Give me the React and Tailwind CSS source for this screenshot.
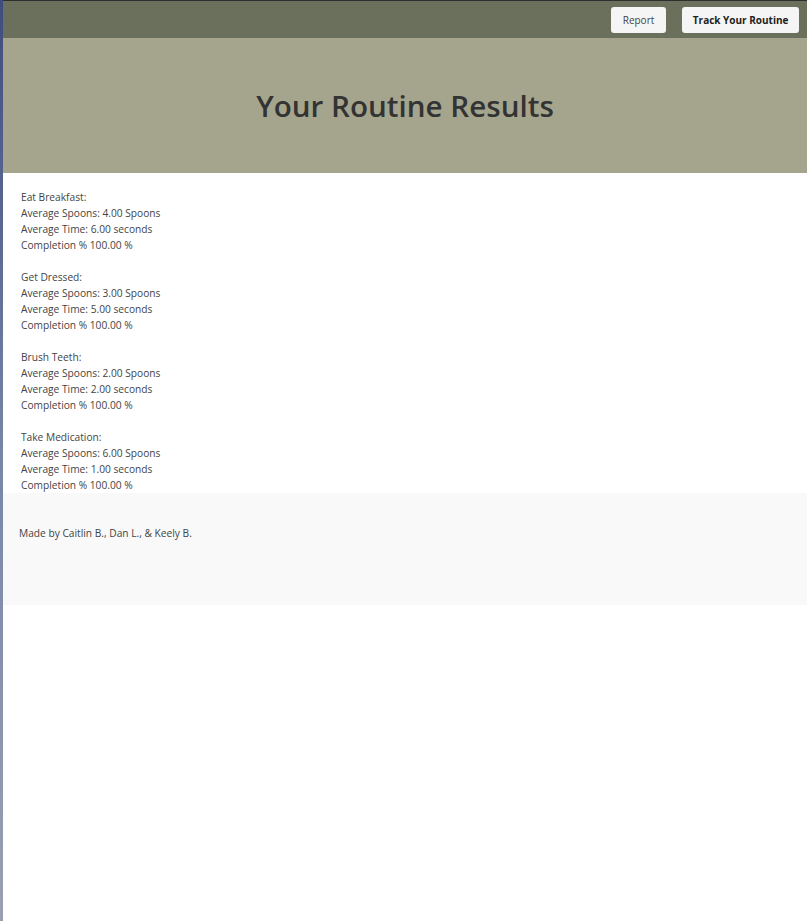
import React from "react";

const routines = [
  { name: "Eat Breakfast", spoons: "4.00", time: "6.00" },
  { name: "Get Dressed", spoons: "3.00", time: "5.00" },
  { name: "Brush Teeth", spoons: "2.00", time: "2.00" },
  { name: "Take Medication", spoons: "6.00", time: "1.00" },
];

export default function App() {
  return (
    <div className="flex min-h-[921px] bg-white" style={{ fontFamily: '"Open Sans", "Noto Sans", sans-serif' }}>
      <div className="w-[3px] shrink-0 bg-gradient-to-b from-[#3f4d7c] via-[#7886a8] to-[#9aa0b0]" />
      <div className="flex-1 flex flex-col">
        <nav className="h-[38px] bg-[#6b705c] border-t border-[#2e2e2e] flex items-start justify-end gap-4 pr-2 pt-[6px]">
          <button className="h-[26px] px-3 rounded-[3px] bg-[#f5f5f5] text-[10px] text-[#444]">Report</button>
          <button className="h-[26px] px-[10.5px] rounded-[3px] bg-[#f5f5f5] text-[10px] font-bold text-[#222]">Track Your Routine</button>
        </nav>
        <header className="h-[135px] bg-[#a5a58d] flex items-center justify-center">
          <h1 className="text-[29.6px] font-semibold text-[#333] leading-none">Your Routine Results</h1>
        </header>
        <main className="pt-4 pl-[18px] text-[10.2px] leading-[16px] text-[#444]">
          {routines.map((r, i) => (
            <div key={r.name} className={i > 0 ? "mt-4" : ""}>
              <div>{r.name}:</div>
              <div>Average Spoons: {r.spoons} Spoons</div>
              <div>Average Time: {r.time} seconds</div>
              <div>Completion % 100.00 %</div>
            </div>
          ))}
        </main>
        <footer className="h-[112px] bg-[#f9f9f9] pt-8 pl-4 text-[10.2px] leading-[16px] text-[#444]">
          Made by Caitlin B., Dan L., &amp; Keely B.
        </footer>
      </div>
    </div>
  );
}
